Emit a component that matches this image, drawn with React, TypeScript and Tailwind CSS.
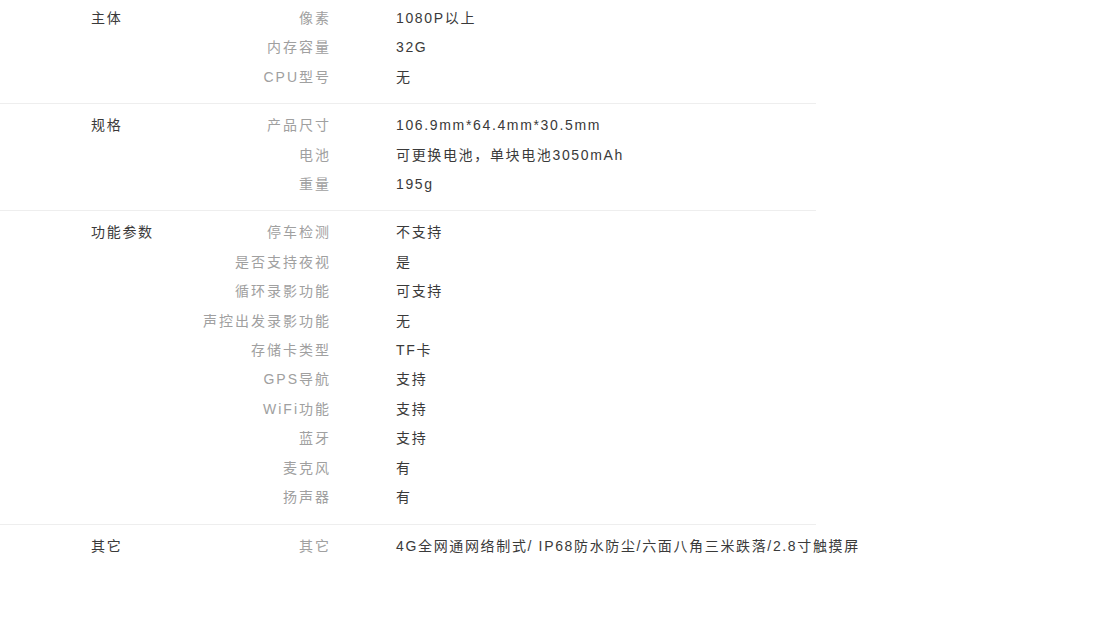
const specs: { group: string; rows: [string, string][] }[] = [
  {
    group: "主体",
    rows: [
      ["像素", "1080P以上"],
      ["内存容量", "32G"],
      ["CPU型号", "无"],
    ],
  },
  {
    group: "规格",
    rows: [
      ["产品尺寸", "106.9mm*64.4mm*30.5mm"],
      ["电池", "可更换电池，单块电池3050mAh"],
      ["重量", "195g"],
    ],
  },
  {
    group: "功能参数",
    rows: [
      ["停车检测", "不支持"],
      ["是否支持夜视", "是"],
      ["循环录影功能", "可支持"],
      ["声控出发录影功能", "无"],
      ["存储卡类型", "TF卡"],
      ["GPS导航", "支持"],
      ["WiFi功能", "支持"],
      ["蓝牙", "支持"],
      ["麦克风", "有"],
      ["扬声器", "有"],
    ],
  },
  {
    group: "其它",
    rows: [["其它", "4G全网通网络制式/ IP68防水防尘/六面八角三米跌落/2.8寸触摸屏"]],
  },
];

export default function App() {
  return (
    <div
      className="min-h-screen w-full bg-white text-[14px] leading-[29.4px]"
      style={{ fontFamily: '"Liberation Sans", Arial, "Noto Sans CJK SC", sans-serif' }}
    >
      <div className="w-[816px]">
        {specs.map((s, i) => (
          <div
            key={s.group}
            className={
              i === specs.length - 1
                ? "flex pt-[7px] pb-[11px] pl-[91px]"
                : i === 0
                  ? "flex pt-[4px] pb-[11px] pl-[91px] border-b border-[#eeeeee]"
                  : "flex pt-[7px] pb-[11px] pl-[91px] border-b border-[#eeeeee]"
            }
          >
            {/* group name */}
            <div className="w-[100px] shrink-0 text-[#3a3a3a] tracking-[1.7px]">{s.group}</div>
            <div className="flex flex-col">
              {s.rows.map(([k, v]) => (
                <div key={k} className="flex">
                  <div className="w-[140px] shrink-0 text-right text-[#a0a0a0] tracking-[2px]">{k}</div>
                  <div className="pl-[65px] whitespace-nowrap text-[#3a3a3a] tracking-[1.65px]">{v}</div>
                </div>
              ))}
            </div>
          </div>
        ))}
      </div>
    </div>
  );
}
